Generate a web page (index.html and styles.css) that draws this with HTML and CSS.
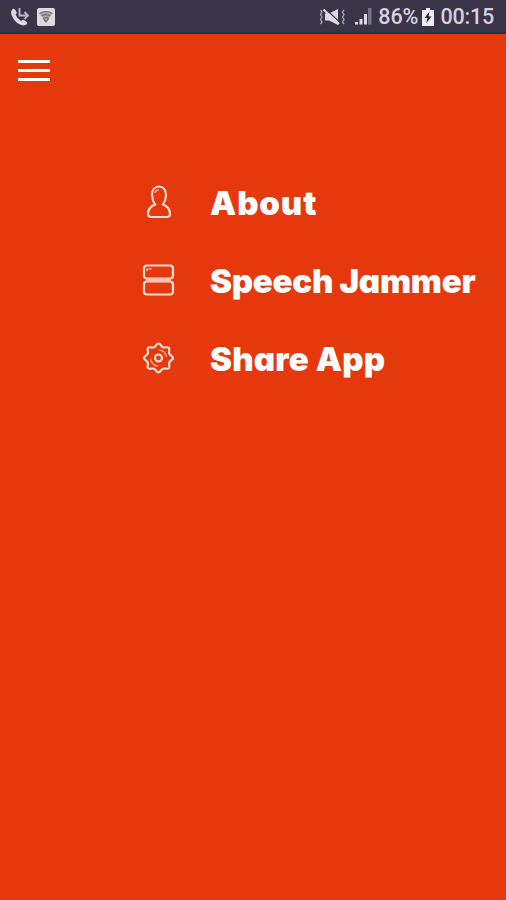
FILE: index.html
```html
<!DOCTYPE html>
<html lang="en">
<head>
<meta charset="utf-8">
<title>Speech Jammer</title>
<link rel="stylesheet" href="styles.css">
</head>
<body>
<div class="status-bar">
<div class="status-left">
<svg class="call-icon" width="20" height="20" viewBox="0 0 20 20">
<path d="M2 2.500Q4 .5 6 4Q7.500 6 5.500 7.500Q7 11.500 11 14Q13 12 14.500 13.300L17 15.200Q17.500 18.500 13 18.500Q5 17 1.500 8Q.5 4.500 2 2.500Z" fill="#dcd9e3"/>
<path d="M9.500 1V8.500H17.500M14.500 5L18 8.500L14.500 12" fill="none" stroke="#b9b5c2" stroke-width="1.900"/>
</svg>
<svg width="18" height="18" viewBox="0 0 18 18">
<rect x="0" y="0" width="18" height="18" rx="2" fill="#dcdadf"/>
<path d="M2.500 5.500Q9 1 15.500 5.500L9 14Z" fill="#aaa8ac"/>
<path d="M2.500 5.500Q9 1.500 15.500 5.500M4.700 8Q9 5.200 13.300 8M6.500 10.500Q9 8.500 11.500 10.500L9 14Z" fill="none" stroke="#6f6d72" stroke-width="1.200"/>
</svg>
</div>
<div class="status-right">
<svg width="27" height="18" viewBox="0 0 27 18">
<path d="M6 5.500H10L19 1V17L10 12.500H6Z" fill="#dcd9e3"/>
<path d="M6 .5L21 14.500" stroke="#393448" stroke-width="1.200"/>
<path d="M4.500 1.500L20 16" stroke="#dcd9e3" stroke-width="2"/>
<path d="M1.500 2L3 4L1.500 6.500L3 9L1.500 11.500L3 14L1.500 16M25 2L23.500 4L25 6.500L23.500 9L25 11.500L23.500 14L25 16" fill="none" stroke="#aaa6b5" stroke-width="1.300"/>
</svg>
<svg class="signal-icon" width="17" height="17" viewBox="0 0 17 17">
<path d="M0 14H3V16.500H0ZM4.500 11H7.500V16.500H4.500ZM9 6H12V16.500H9Z" fill="#dcd9e3"/>
<path d="M13 0H16.500V16.500H13Z" fill="#777283"/>
</svg>
<span class="percent">86%</span>
<svg class="battery-icon" width="12" height="18" viewBox="0 0 12 18">
<path d="M4 0H8V2H12V18H0V2H4Z" fill="#eeecf2"/>
<path d="M7.500 3.500L2.500 10H5.500L4 15.500L9.500 8.500H6.500Z" fill="#29242f"/>
</svg>
<span class="clock">00:15</span>
</div>
</div>
<div class="toolbar">
<div class="menu-button">
<span></span>
<span></span>
<span></span>
</div>
</div>
<ul class="menu">
<li class="about">
<svg width="34" height="36" viewBox="0 0 34 36">
<path d="M18 2.500C13.500 2.500 11 6 11 11C11 15 12.300 18 14 20.500C9 22.500 7 26 7 30Q7 33 10 33H26Q29 33 29 30C29 26 27 22.500 22 20.500C23.700 18 25 15 25 11C25 6 22.500 2.500 18 2.500Z"/>
<path class="detail" d="M14 9Q14.500 6 18 5.500"/>
</svg>
<span>About</span>
</li>
<li class="jammer">
<svg width="34" height="36" viewBox="0 0 34 36">
<rect x="3" y="3.500" width="29" height="13" rx="3"/>
<rect x="3" y="19.500" width="29" height="13" rx="3"/>
<path class="divider" d="M5 18H30"/>
<path class="detail" d="M6 9.500V7H11"/>
</svg>
<span>Speech Jammer</span>
</li>
<li class="share">
<svg width="34" height="36" viewBox="0 0 34 36">
<path d="M17.500 3.500C19.500 3.500 20 6.500 22 7.300C24 8 26.500 6.500 27.800 7.700C29.200 9 27.500 11.500 28.200 13.500C29 15.500 32 16 32 18C32 20 29 20.500 28.200 22.500C27.500 24.500 29.200 27 27.800 28.300C26.500 29.500 24 28 22 28.700C20 29.500 19.500 32.500 17.500 32.500C15.500 32.500 15 29.500 13 28.700C11 28 8.500 29.500 7.200 28.300C5.800 27 7.500 24.500 6.800 22.500C6 20.500 3 20 3 18C3 16 6 15.500 6.800 13.500C7.500 11.500 5.800 9 7.200 7.700C8.500 6.500 11 8 13 7.300C15 6.500 15.500 3.500 17.500 3.500Z"/>
<circle cx="17.500" cy="18" r="3.500"/>
<path class="detail" d="M18 10A8 8 0 0 1 25.500 17M17 26A8 8 0 0 1 9.500 19"/>
</svg>
<span>Share App</span>
</li>
</ul>
</body>
</html>
```

FILE: styles.css
```css
body {
    margin: 0;
    height: 900px;
    background-color: #e6380d;
    color: #fff;
    overflow: hidden;
}

.status-bar {
    display: flex;
    justify-content: space-between;
    align-items: center;
    box-sizing: border-box;
    height: 34px;
    padding: 1px 12px 0 10px;
    background-color: #393448;
    border-bottom: 2px solid #203447;
    color: #d5d1de;
    font-family: Roboto, sans-serif;
    font-size: 21.5px;
    font-weight: 500;
}

.status-left, .status-right {
    display: flex;
    align-items: center;
}

.status-left {
    gap: 7px;
}

.signal-icon {
    margin-left: 9px;
}

.percent {
    margin-left: 6px;
}

.battery-icon {
    margin: 0 6px 0 4px;
}

.status-right .clock {
    letter-spacing: -0.2px;
}

.toolbar {
    padding: 26px 18px 0;
}

.menu-button {
    display: flex;
    flex-direction: column;
    gap: 6px;
    width: 32px;
}

.menu-button span {
    height: 3px;
    background-color: #fff;
}

.menu {
    list-style: none;
    margin: 82px 0 0;
    padding: 0 0 0 141px;
}

.menu li {
    display: flex;
    align-items: center;
    gap: 35px;
    height: 78px;
    font-family: Inter, sans-serif;
    font-size: 33px;
    font-weight: 900;
    font-feature-settings: "cv11";
    white-space: nowrap;
}

.menu li span {
    padding-top: 2px;
}

.menu .about {
    letter-spacing: 0.9px;
}

.menu .jammer {
    letter-spacing: -0.25px;
}

.menu .share {
    letter-spacing: 0.2px;
}

.menu svg {
    fill: none;
    stroke: #ffddd2;
    stroke-width: 2.2;
}

.menu .detail {
    stroke: #ff9f85;
    stroke-width: 1.5;
}

.menu .divider {
    stroke: #ffc3b3;
    stroke-width: 4;
}
```
